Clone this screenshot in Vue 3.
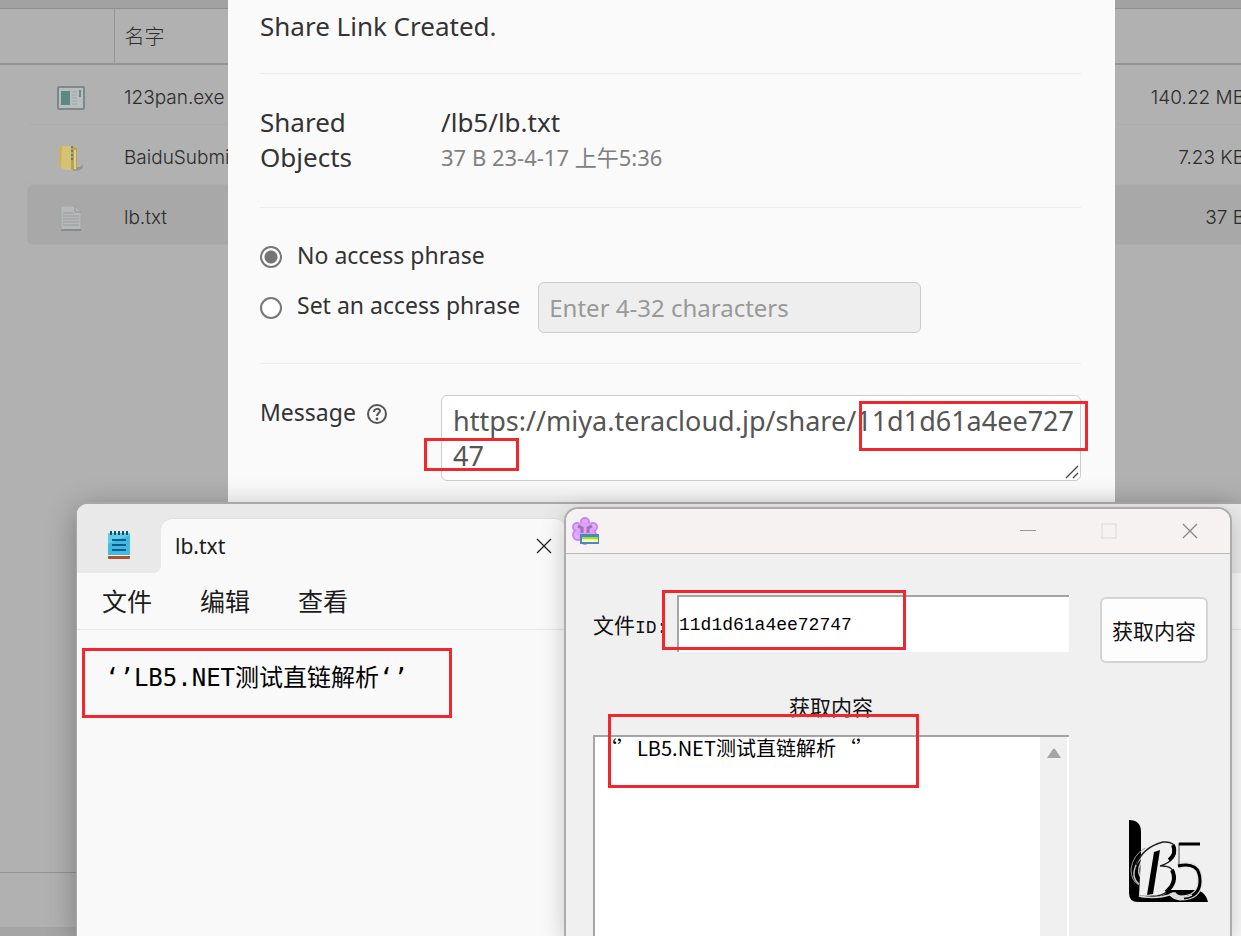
<template>
  <div class="desktop">
    <!-- 文件列表 -->
    <main class="file-page">
      <div class="page-strip"></div>
      <table class="file-table">
        <thead>
          <tr>
            <th class="col-icon"></th>
            <th class="col-name">名字</th>
            <th class="col-size"></th>
          </tr>
        </thead>
        <tbody>
          <tr v-for="file in files" :key="file.name" :class="{ selected: file.selected }">
            <td>
              <div class="cell cell-icon">
                <svg v-if="file.type === 'exe'" width="28" height="24" viewBox="0 0 28 24">
                  <rect x="1" y="1" width="26" height="22" rx="1" fill="#b9bdbd" stroke="#7f8888" stroke-width="2" />
                  <rect x="4" y="5" width="9" height="14" fill="#5b8b80" />
                  <path d="M15 6h5M15 9h5M15 12h5M15 15h5M15 18h5" stroke="#a2a6a6" />
                  <rect x="22" y="4" width="2" height="7" fill="#678f87" />
                </svg>
                <svg v-else-if="file.type === 'zip'" width="28" height="28" viewBox="0 0 28 28">
                  <path d="M16 23h7l3-3v4l-5 3h-5z" fill="#969696" />
                  <path d="M2 3l7-2v24l-7-3z" fill="#c8b35f" />
                  <path d="M5 2h9v24H9l-5-2z" fill="#d4c277" />
                  <path d="M14 3l6 1v22l-6-1z" fill="#baa24f" />
                  <path d="M15 2v14" stroke="#777" stroke-width="2" stroke-dasharray="2 2" />
                  <path d="M18 6v19" stroke="#ddcf93" stroke-width="2" />
                </svg>
                <svg v-else width="22" height="26" viewBox="0 0 22 26">
                  <path d="M1 1h14l6 6v18H1z" fill="#b7b9b9" stroke="#a2a6a8" />
                  <path d="M15 1v6h6" fill="none" stroke="#8d9193" />
                  <path d="M3 8h11M3 11h16M3 14h16M3 17h16M3 20h16" stroke="#989d9f" />
                  <path d="M1 25h20" stroke="#868b8e" stroke-width="2" />
                </svg>
              </div>
            </td>
            <td><div class="cell">{{ file.name }}</div></td>
            <td><div class="cell cell-size">{{ file.size }}</div></td>
          </tr>
        </tbody>
      </table>
      <footer class="page-footer"></footer>
    </main>

    <!-- 分享对话框 -->
    <section class="share-dialog">
      <h2 class="dialog-title">Share Link Created.</h2>

      <div class="dialog-row">
        <div class="row-label">Shared Objects</div>
        <div class="row-value">
          <div class="object-path">/lb5/lb.txt</div>
          <div class="object-meta">37 B 23-4-17 上午5:36</div>
        </div>
      </div>

      <div class="phrase-group">
        <div class="phrase-option">
          <input id="phrase-none" v-model="phraseMode" type="radio" name="phrase" value="none" />
          <label for="phrase-none">No access phrase</label>
        </div>
        <div class="phrase-option">
          <input id="phrase-set" v-model="phraseMode" type="radio" name="phrase" value="set" />
          <label for="phrase-set">Set an access phrase</label>
          <input
            v-model="phrase"
            class="phrase-input"
            type="text"
            aria-label="Access phrase"
            placeholder="Enter 4-32 characters"
            :disabled="phraseMode === 'none'"
          />
        </div>
      </div>

      <div class="dialog-row message-row">
        <div class="row-label">
          <label for="message">Message</label>
          <svg class="help-icon" width="22" height="22" viewBox="0 0 22 22">
            <circle cx="11" cy="11" r="9" fill="none" stroke="#555" stroke-width="2" />
            <path d="M8 9c0-4 6-4 6-1 0 2-3 2-3 5" fill="none" stroke="#555" stroke-width="2" />
            <circle cx="11" cy="16" r="1.4" fill="#555" />
          </svg>
        </div>
        <div class="message-field">
          <textarea id="message" v-model="message" rows="2" spellcheck="false"></textarea>
          <svg class="resize-grip" width="14" height="14" viewBox="0 0 14 14">
            <path d="M1 13L13 1M8 13l5-5" stroke="#444" stroke-width="1.3" />
          </svg>
          <span class="mark mark-id"></span>
          <span class="mark mark-tail"></span>
        </div>
      </div>
    </section>

    <!-- 记事本 -->
    <section class="notepad">
      <div class="notepad-titlebar">
        <svg class="notepad-icon" width="24" height="30" viewBox="0 0 24 30">
          <rect x="1" y="25" width="22" height="4" rx="1" fill="#a8532d" />
          <rect x="1" y="24" width="22" height="2" fill="#eee" />
          <rect x="1" y="3" width="22" height="22" rx="1" fill="#5acbe8" />
          <path d="M1 14L23 5v19a1 1 0 0 1-1 1H1z" fill="#3fb9df" />
          <path d="M4 1v4M8 1v4M12 1v4M16 1v4M20 1v4" stroke="#17506f" stroke-width="2" />
          <path d="M5 10h14M5 15h14M5 20h14" stroke="#0d5b86" stroke-width="2" />
        </svg>
        <div class="notepad-tab">
          <span>lb.txt</span>
          <button class="icon-btn" aria-label="关闭标签页">
            <svg width="16" height="16" viewBox="0 0 16 16">
              <path d="M1 1l14 14M15 1L1 15" stroke="#222" stroke-width="1.3" />
            </svg>
          </button>
        </div>
      </div>
      <nav class="notepad-menu">
        <button v-for="item in menus" :key="item">{{ item }}</button>
      </nav>
      <div class="notepad-body">
        <textarea v-model="noteText" aria-label="文本编辑器" spellcheck="false"></textarea>
        <span class="mark mark-note"></span>
      </div>
    </section>

    <!-- 解析工具 -->
    <section class="tool">
      <div class="tool-titlebar">
        <svg width="30" height="30" viewBox="0 0 30 30">
          <g fill="#e2b0ff" stroke="#cf80f8" stroke-width="2">
            <circle cx="14" cy="6" r="4" />
            <circle cx="6" cy="11" r="4" />
            <circle cx="22" cy="11" r="4" />
            <circle cx="7" cy="19" r="5" />
            <circle cx="20" cy="19" r="5" />
            <circle cx="14" cy="24" r="4" />
          </g>
          <circle cx="14" cy="15" r="9" fill="#dda0ff" />
          <path d="M7 10l4 2v5M21 10l-4 2v5" fill="none" stroke="#9d72ad" stroke-width="3" />
          <rect x="9" y="18" width="19" height="10" fill="#4b86c8" />
          <rect x="11" y="21" width="16" height="3" fill="#8df000" />
          <rect x="11" y="23" width="16" height="3" fill="#fbffb0" />
        </svg>
        <div class="window-buttons">
          <button class="icon-btn" aria-label="最小化">
            <svg width="16" height="16" viewBox="0 0 16 16">
              <path d="M0 7.5h16" stroke="#999" />
            </svg>
          </button>
          <button class="icon-btn" aria-label="最大化" disabled>
            <svg width="16" height="16" viewBox="0 0 16 16">
              <rect x="1" y="1" width="14" height="14" fill="none" stroke="#ddd8d8" />
            </svg>
          </button>
          <button class="icon-btn" aria-label="关闭">
            <svg width="16" height="16" viewBox="0 0 16 16">
              <path d="M1 1l14 14M15 1L1 15" stroke="#888" stroke-width="1.3" />
            </svg>
          </button>
        </div>
      </div>
      <div class="tool-body">
        <div class="tool-main">
          <div class="id-field">
            <label for="file-id">文件<span class="latin">ID:</span></label>
            <input id="file-id" v-model="fileId" type="text" spellcheck="false" />
            <span class="mark mark-field"></span>
          </div>
          <label class="result-label" for="result">获取内容</label>
          <div class="result-box">
            <textarea id="result" v-model="result" spellcheck="false"></textarea>
            <div class="scrollbar">
              <svg width="16" height="12" viewBox="0 0 16 12">
                <path d="M1 11L7 2q1-1 2 0l6 9z" fill="#a5a5a5" />
              </svg>
            </div>
            <span class="mark mark-result"></span>
          </div>
        </div>
        <div class="tool-side">
          <button class="fetch-btn">获取内容</button>
          <svg class="logo" width="80" height="84" viewBox="0 0 80 84">
            <path d="M1 1q12 0 12 12v50q0 8 8 8h45q11 0 14 12H10Q1 83 1 74z" fill="#000" />
            <path d="M25 32q-9 2-16 12Q2 58 11 65M15 40q-8 12-1 20" fill="none" stroke="#bbb" stroke-width="1.5" />
            <path d="M13 36q8-11 23-13 12-1 12 9-1 10-15 15 14-1 14 11-2 17-19 20-8 1-17 0" fill="#f0f0f0" />
            <path d="M8 46q7-18 27-23 13-1 12 9-1 11-15 15 15-1 14 12-2 15-17 18-6 1-19 0" fill="none" stroke="#222" stroke-width="1.5" />
            <path d="M3 50q2-14 14-21M3 50q0 12 8 16" fill="none" stroke="#999" />
            <path d="M26 33l6-2-7 44-6 1z" fill="#000" />
            <path d="M45 26q4 9-4 15M44 51q6 12-6 22" fill="none" stroke="#000" stroke-width="4" />
            <path d="M50 47q22-6 22 15 0 17-20 17-7-1-9-5" fill="none" stroke="#ddd" stroke-width="5" />
            <path d="M51 46V24" fill="none" stroke="#444" />
            <path d="M51 25h21" stroke="#000" stroke-width="3" />
            <path d="M50 47q22-5 22 15 0 15-16 17" fill="none" stroke="#000" stroke-width="3" />
            <path d="M11 77q18 4 36-3 6 7 17 2" fill="none" stroke="#ddd" stroke-width="1.5" />
          </svg>
        </div>
      </div>
    </section>
  </div>
</template>

<script setup>
import { ref } from 'vue';

// 文件列表
const files = ref([
  { name: '123pan.exe', size: '140.22 MB', type: 'exe' },
  { name: 'BaiduSubmit.zip', size: '7.23 KB', type: 'zip' },
  { name: 'lb.txt', size: '37 B', type: 'txt', selected: true }
]);

// 分享设置
const phraseMode = ref('none');
const phrase = ref('');
const message = ref('https://miya.teracloud.jp/share/11d1d61a4ee72747');

// 记事本
const menus = ['文件', '编辑', '查看'];
const noteText = ref('‘’LB5.NET测试直链解析‘’');

// 解析工具
const fileId = ref('11d1d61a4ee72747');
const result = ref('‘’LB5.NET测试直链解析‘’');
</script>

<style>
body {
  margin: 0;
}
</style>

<style scoped>
* {
  box-sizing: border-box;
}

.desktop {
  position: relative;
  min-height: 100vh;
  overflow: hidden;
  font-family: "Noto Sans", "Noto Sans CJK SC", sans-serif;
}

button,
input,
textarea {
  font-family: inherit;
}

textarea {
  display: block;
  border: none;
  outline: none;
  resize: none;
  overflow: hidden;
}

.icon-btn {
  display: flex;
  padding: 0;
  border: none;
  background: none;
}

/* 红色标注框 */
.mark {
  position: absolute;
  border: 3px solid #f0272d;
  pointer-events: none;
}

/* 文件列表 */
.file-page {
  display: flex;
  flex-direction: column;
  min-height: 100vh;
  background-color: #b1b1b1;
  color: #2c2c2c;
  font-family: Inter, "Noto Sans CJK SC", sans-serif;
  font-size: 19px;
  font-weight: 300;
}

.page-strip {
  height: 9px;
  background-color: #a2a2a2;
  border-bottom: 1px solid #8f8f8f;
}

.file-table {
  width: calc(100% + 4px);
  border-collapse: collapse;
  table-layout: fixed;
}

.file-table th {
  height: 55px;
  padding: 0 0 2px 10px;
  border-bottom: 2px solid #949494;
  text-align: left;
  font-size: 20px;
  font-weight: 300;
}

.file-table .col-icon {
  width: 114px;
  border-right: 1px solid #959595;
}

.file-table .col-size {
  width: 200px;
}

.file-table td {
  padding: 0;
}

.cell {
  display: flex;
  align-items: center;
  height: 60px;
  padding: 6px 0 0 10px;
  border-bottom: 1px solid #adadad;
}

.cell-icon {
  justify-content: center;
  margin-left: 27px;
  padding-left: 0;
  border-radius: 6px 0 0 6px;
}

.cell-size {
  justify-content: flex-end;
}

.selected .cell {
  background-color: #a8a8a8;
}

.page-footer {
  height: 64px;
  margin-top: auto;
  border-top: 1px solid #939393;
  border-bottom: 9px solid #a5a5a5;
}

/* 分享对话框 */
.share-dialog {
  position: absolute;
  top: 0;
  bottom: 0;
  left: 228px;
  right: 126px;
  padding: 0 34px 0 32px;
  background-color: #fafafa;
  color: #333;
  font-size: 26px;
  line-height: 35px;
}

.dialog-title {
  margin: 0;
  padding: 9px 0 29px;
  font-size: 26px;
  font-weight: 400;
}

.dialog-row,
.phrase-group {
  border-top: 1px solid #ececec;
}

.dialog-row {
  display: flex;
  padding: 31px 0 32px;
}

.row-label {
  width: 181px;
  padding-right: 40px;
}

.row-value,
.message-field {
  flex: 1;
}

.object-meta {
  color: #808080;
  font-size: 22px;
}

.phrase-group {
  padding: 24px 0 30px;
}

.phrase-option {
  display: flex;
  align-items: center;
  min-height: 50px;
}

.phrase-option label {
  padding-bottom: 4px;
  font-size: 23px;
}

.phrase-option input[type="radio"] {
  width: 22px;
  height: 22px;
  margin: 0 15px 0 0;
  appearance: none;
  border: 2px solid #777;
  border-radius: 50%;
  background-color: #fff;
}

.phrase-option input[type="radio"]:checked {
  background: radial-gradient(circle, #757575 6px, #fff 7px);
}

.phrase-input {
  width: 383px;
  height: 51px;
  margin-left: 18px;
  padding: 0 10px;
  border: 1px solid #ccc;
  border-radius: 6px;
  background-color: #eee;
  font-size: 24px;
}

.phrase-input::placeholder {
  color: #999;
}

.message-row .row-label {
  display: flex;
  gap: 10px;
  padding-right: 0;
  font-size: 23px;
}

.help-icon {
  margin-top: 8px;
}

.message-field {
  position: relative;
}

.message-field textarea {
  width: 100%;
  height: 86px;
  padding: 7px 2px 7px 11px;
  border: 1px solid #ccc;
  border-radius: 6px;
  background-color: #fff;
  color: #555;
  font-size: 27px;
  line-height: 35px;
  word-break: break-all;
}

.resize-grip {
  position: absolute;
  right: 2px;
  bottom: 2px;
}

.mark-id {
  top: 6px;
  right: -7px;
  width: 229px;
  height: 50px;
}

.mark-tail {
  top: 43px;
  left: -17px;
  width: 95px;
  height: 33px;
}

/* 记事本 */
.notepad {
  display: flex;
  flex-direction: column;
  position: absolute;
  top: 502px;
  bottom: 0;
  left: 76px;
  right: 0;
  border: solid #a8a8a8;
  border-width: 2px 0 0 1px;
  border-radius: 12px 0 0 0;
  background-color: #f9f9f9;
  box-shadow: 0 6px 30px rgba(0, 0, 0, 0.3);
  color: #1b1b1b;
}

.notepad-titlebar {
  display: flex;
  height: 69px;
  padding-left: 30px;
  border-radius: 10px 0 0 0;
  background-color: #e9e9e9;
}

.notepad-icon {
  margin: 26px 30px 0 0;
}

.notepad-tab {
  display: flex;
  align-items: center;
  justify-content: space-between;
  position: relative;
  width: 405px;
  margin-top: 14px;
  padding: 0 14px;
  border-top: 1px solid #dedede;
  border-radius: 12px 12px 0 0;
  background-color: #f9f9f9;
  font-size: 21px;
}

/* 标签左下角的内凹圆角 */
.notepad-tab::before {
  content: "";
  position: absolute;
  left: -8px;
  bottom: 0;
  width: 8px;
  height: 8px;
  background: radial-gradient(circle at 0 0, #e9e9e9 8px, #f9f9f9 8px);
}

.notepad-menu {
  display: flex;
  gap: 48px;
  padding: 12px 25px;
  border-bottom: 1px solid #e6e6e6;
}

.notepad-menu button {
  padding: 0;
  border: none;
  background: none;
  color: inherit;
  font-size: 25px;
  line-height: 32px;
}

.notepad-body {
  flex: 1;
  position: relative;
}

.notepad-body textarea {
  width: 100%;
  height: 100%;
  padding: 30px 28px;
  background: transparent;
  color: #000;
  font-family: "DejaVu Sans Mono", "Noto Sans CJK SC", monospace;
  font-size: 24px;
  line-height: 36px;
}

.mark-note {
  top: 18px;
  left: 5px;
  width: 370px;
  height: 70px;
}

/* 解析工具 */
.tool {
  display: flex;
  flex-direction: column;
  position: absolute;
  top: 507px;
  bottom: 0;
  left: 564px;
  right: 9px;
  border: 2px solid #acacac;
  border-bottom: none;
  border-radius: 14px 14px 0 0;
  background-color: #f0f0f0;
  box-shadow: 0 6px 24px rgba(0, 0, 0, 0.2);
  color: #111;
  font-family: "Noto Sans CJK SC", sans-serif;
  font-size: 21px;
}

.tool-titlebar {
  display: flex;
  align-items: center;
  justify-content: space-between;
  height: 45px;
  padding: 0 32px 0 5px;
  border-bottom: 1px solid #b9b9b9;
  border-radius: 12px 12px 0 0;
  background-color: #f6f2f2;
}

.window-buttons {
  display: flex;
  gap: 65px;
}

.tool-body {
  flex: 1;
  display: grid;
  grid-template-columns: 1fr 108px;
  gap: 31px;
  padding: 41px 22px 0 27px;
}

.tool-main {
  display: flex;
  flex-direction: column;
}

.id-field {
  display: flex;
  align-items: center;
  position: relative;
}

.id-field label {
  width: 84px;
}

.latin {
  font-family: "Liberation Mono", monospace;
  font-size: 18px;
}

.id-field input {
  flex: 1;
  min-width: 0;
  height: 57px;
  padding: 0;
  border: solid #a5a5a5;
  border-width: 2px 0 0 2px;
  border-radius: 0;
  background-color: #fff;
  font-family: "Liberation Mono", monospace;
  font-size: 18px;
}

.result-label {
  margin: 38px auto 13px;
  line-height: 32px;
}

.result-box {
  flex: 1;
  display: flex;
  position: relative;
  border: solid #a5a5a5;
  border-width: 2px 0 0 2px;
  background-color: #fff;
}

.result-box textarea {
  flex: 1;
  min-width: 0;
  padding: 0 2px;
  background: transparent;
  font-size: 20px;
  line-height: 22px;
}

.scrollbar {
  width: 29px;
  padding: 10px 6px;
  border-right: 2px solid #fff;
  background-color: #f0f0f0;
  line-height: 0;
}

.mark-field {
  top: -5px;
  left: 69px;
  width: 244px;
  height: 60px;
}

.mark-result {
  top: -23px;
  left: 13px;
  width: 311px;
  height: 74px;
}

.tool-side {
  display: flex;
  flex-direction: column;
  align-items: flex-end;
  padding-top: 2px;
}

.fetch-btn {
  width: 108px;
  height: 66px;
  padding: 0;
  border: 2px solid #d4d4d4;
  border-radius: 6px;
  background-color: #fdfdfd;
  color: #111;
  font-size: 21px;
}

.logo {
  margin-top: 156px;
}
</style>
